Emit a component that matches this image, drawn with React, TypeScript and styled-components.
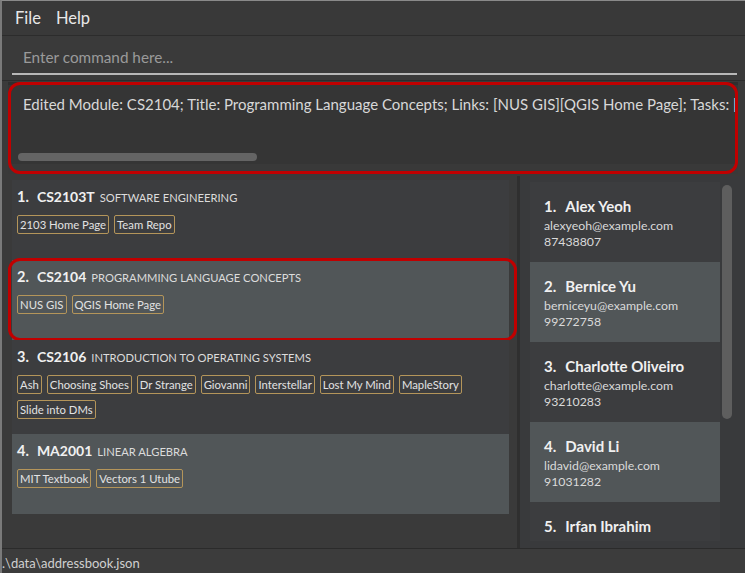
import styled, { createGlobalStyle } from "styled-components";

const Global = createGlobalStyle`
  html, body { margin: 0; padding: 0; background: #3a3a3a; }
  body { font-family: "Lato", "Open Sans", sans-serif; }
  #root { width: 745px; height: 573px; overflow: hidden; }
`;

const Window = styled.div`
  width: 745px;
  height: 573px;
  display: flex;
  flex-direction: column;
  background: #3a3a3a;
  border-left: 2px solid #7a7a7a;
  border-top: 1px solid #8a8a8a;
  box-sizing: border-box;
  color: #e0e0e0;
`;

const MenuBar = styled.div`
  height: 34px;
  display: flex;
  align-items: center;
  gap: 15px;
  padding-left: 13px;
  background: #393939;
  border-bottom: 1px solid #2c2c2c;
  font-size: 16.5px;
  color: #e8e8e8;
`;

const CommandBox = styled.div`
  height: 44px;
  padding: 0 8px 0 10px;
  display: flex;
  border-bottom: 1px solid #2c2c2c;
`;

const CommandInput = styled.div`
  flex: 1;
  display: flex;
  align-items: center;
  padding: 4px 0 0 11px;
  font-size: 15.3px;
  color: #9a9a9a;
  border-bottom: 2px solid #b8b8b8;
  margin-bottom: 5px;
`;

const ResultArea = styled.div`
  height: 95px;
  padding: 1px 7px 2px 6px;
  box-sizing: border-box;
  display: flex;
`;

const Marked = styled.div<{ $marked?: boolean }>`
  position: relative;
  &::after {
    content: "";
    display: ${({ $marked }) => ($marked ? "block" : "none")};
    position: absolute;
    border: 3px solid #c00000;
    border-radius: 12px;
    pointer-events: none;
  }
`;

const ResultBox = styled(Marked)`
  flex: 1;
  background: #353535;
  display: flex;
  flex-direction: column;
  padding: 12px 0 0 15px;
  overflow: hidden;
  box-shadow: inset 0 3px 0 #2f2f2f, inset 0 -10px 0 #393939;
  &::after { inset: 0; }
`;

const ResultText = styled.div`
  white-space: nowrap;
  font-size: 15px;
  color: #d8d8d8;
  line-height: 20px;
`;

const HScroll = styled.div`
  margin-top: auto;
  margin-bottom: 13px;
  margin-left: -5px;
  width: 239px;
  height: 8px;
  border-radius: 4px;
  background: #646464;
`;

const Split = styled.div`
  flex: 1;
  display: flex;
  min-height: 0;
`;

const ModulePanel = styled.div`
  width: 518px;
  background: #3a3a3a;
  padding: 4px 8px 0 10px;
  box-sizing: border-box;
  display: flex;
  flex-direction: column;
  border-right: 3px solid #2f2f2f;
`;

const ModuleCard = styled(Marked)<{ $alt?: boolean; $tall?: boolean }>`
  background: ${({ $alt }) => ($alt ? "#515658" : "#3c3d3f")};
  padding: 6px 6px 0 5px;
  display: flex;
  flex-direction: column;
  gap: 6px;
  height: ${({ $tall }) => ($tall ? "94px" : "80px")};
  flex-shrink: 0;
  box-sizing: border-box;
  &::after { inset: -2px -8px -1px -4px; }
`;

const CardTitle = styled.div`
  display: flex;
  align-items: baseline;
  line-height: 22px;
`;

const Index = styled.span`
  font-weight: 700;
  font-size: 14.5px;
  color: #f0f0f0;
  margin-right: 8px;
`;

const Code = styled.span`
  font-weight: 700;
  font-size: 14px;
  color: #f0f0f0;
  margin-right: 5px;
`;

const Title = styled.span`
  font-size: 11.2px;
  color: #dcdcdc;
`;

const Tags = styled.div`
  display: flex;
  flex-wrap: wrap;
  gap: 6px 5px;
`;

const Tag = styled.span`
  font-size: 11.3px;
  line-height: 17px;
  padding: 0 2px;
  color: #e2e2e2;
  border: 1.5px solid #b4955a;
  border-radius: 2px;
`;

const PersonPanel = styled.div`
  flex: 1;
  display: flex;
  background: #393a3c;
  padding: 6px 10px 7px 10px;
  gap: 2px;
  overflow: hidden;
`;

const PersonList = styled.div`
  width: 190px;
  display: flex;
  flex-direction: column;
  overflow: hidden;
`;

const PersonCard = styled.div<{ $alt?: boolean }>`
  flex-shrink: 0;
  height: 80px;
  box-sizing: border-box;
  background: ${({ $alt }) => ($alt ? "#515658" : "#3c3d3f")};
  padding: 14px 14px 0;
  display: flex;
  flex-direction: column;
`;

const PersonName = styled.div`
  font-weight: 700;
  font-size: 15px;
  color: #f0f0f0;
  line-height: 21px;
  margin-bottom: 1px;
  span { margin-right: 9px; }
`;

const PersonLine = styled.div`
  font-size: 12.3px;
  line-height: 16px;
  color: #dadada;
`;

const VScroll = styled.div`
  margin-top: 3px;
  width: 10px;
  height: 234px;
  border-radius: 5px;
  background: #5e5e5e;
`;

const StatusBar = styled.div`
  height: 25px;
  background: #3c3c3c;
  border-top: 1px solid #2b2b2b;
  display: flex;
  align-items: center;
  padding-top: 3px;
  box-sizing: border-box;
  font-size: 13px;
  color: #d0d0d0;
`;

const modules = [
  { code: "CS2103T", title: "SOFTWARE ENGINEERING", tags: ["2103 Home Page", "Team Repo"] },
  { code: "CS2104", title: "PROGRAMMING LANGUAGE CONCEPTS", tags: ["NUS GIS", "QGIS Home Page"], marked: true },
  {
    code: "CS2106",
    title: "INTRODUCTION TO OPERATING SYSTEMS",
    tags: ["Ash", "Choosing Shoes", "Dr Strange", "Giovanni", "Interstellar", "Lost My Mind", "MapleStory", "Slide into DMs"],
  },
  { code: "MA2001", title: "LINEAR ALGEBRA", tags: ["MIT Textbook", "Vectors 1 Utube"] },
];

const persons = [
  { name: "Alex Yeoh", email: "alexyeoh@example.com", phone: "87438807" },
  { name: "Bernice Yu", email: "berniceyu@example.com", phone: "99272758" },
  { name: "Charlotte Oliveiro", email: "charlotte@example.com", phone: "93210283" },
  { name: "David Li", email: "lidavid@example.com", phone: "91031282" },
  { name: "Irfan Ibrahim", email: "irfan@example.com", phone: "92492021" },
];

export default function App() {
  return (
    <>
      <Global />
      <Window>
        <MenuBar>
          <span>File</span>
          <span>Help</span>
        </MenuBar>
        <CommandBox>
          <CommandInput>Enter command here...</CommandInput>
        </CommandBox>
        <ResultArea>
          <ResultBox $marked>
            <ResultText>
              Edited Module: CS2104; Title: Programming Language Concepts; Links: [NUS GIS][QGIS Home Page]; Tasks: [MIT Textbook]
            </ResultText>
            <HScroll />
          </ResultBox>
        </ResultArea>
        <Split>
          <ModulePanel>
            {modules.map((m, i) => (
              <ModuleCard key={m.code} $alt={i % 2 === 1} $marked={m.marked} $tall={m.tags.length > 4}>
                <CardTitle>
                  <Index>{i + 1}.</Index>
                  <Code>{m.code}</Code>
                  <Title>{m.title}</Title>
                </CardTitle>
                <Tags>
                  {m.tags.map((t) => (
                    <Tag key={t}>{t}</Tag>
                  ))}
                </Tags>
              </ModuleCard>
            ))}
          </ModulePanel>
          <PersonPanel>
            <PersonList>
              {persons.map((p, i) => (
                <PersonCard key={p.name} $alt={i % 2 === 1}>
                  <PersonName>
                    <span>{i + 1}.</span>
                    {p.name}
                  </PersonName>
                  <PersonLine>{p.email}</PersonLine>
                  <PersonLine>{p.phone}</PersonLine>
                </PersonCard>
              ))}
            </PersonList>
            <VScroll />
          </PersonPanel>
        </Split>
        <StatusBar>.\data\addressbook.json</StatusBar>
      </Window>
    </>
  );
}
